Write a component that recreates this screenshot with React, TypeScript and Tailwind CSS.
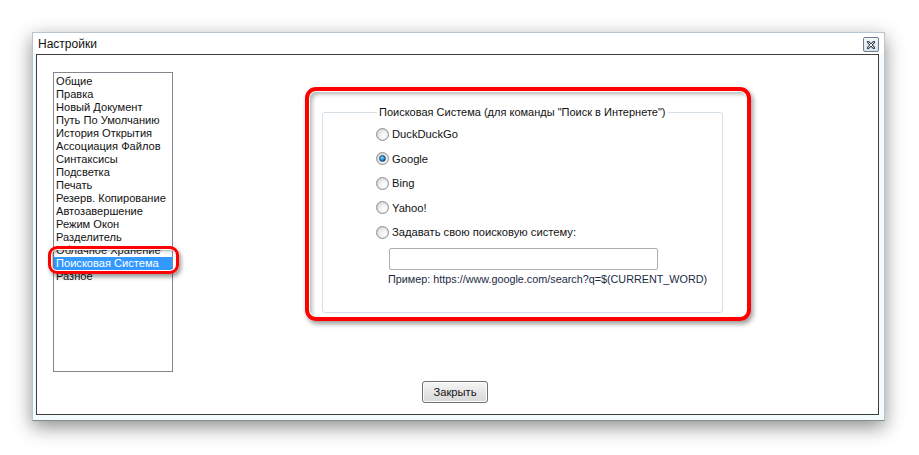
import React from "react";

const items = [
  "Общие",
  "Правка",
  "Новый Документ",
  "Путь По Умолчанию",
  "История Открытия",
  "Ассоциация Файлов",
  "Синтаксисы",
  "Подсветка",
  "Печать",
  "Резерв. Копирование",
  "Автозавершение",
  "Режим Окон",
  "Разделитель",
  "Облачное Хранение",
  "Поисковая Система",
  "Разное",
];

function Radio({ checked, label }: { checked?: boolean; label: string }) {
  return (
    <div className="flex items-center h-[16px]">
      <div className="w-[13px] h-[13px] rounded-full border border-[#8e8f8f] bg-[radial-gradient(circle_at_65%_65%,#ffffff_0%,#f0f0f0_40%,#cfcfcf_100%)] flex items-center justify-center shadow-[inset_0_0_1px_rgba(0,0,0,0.2)]">
        {checked && (
          <div className="w-[7px] h-[7px] rounded-full border border-[#1b4e7a] bg-[radial-gradient(circle_at_40%_35%,#9fe0ff_0%,#2a8fd6_45%,#0d3f74_100%)]" />
        )}
      </div>
      <span className="ml-[3px] text-[11.2px] leading-[14px] text-[#111]">{label}</span>
    </div>
  );
}

export default function App() {
  return (
    <div
      className="relative w-[919px] h-[455px] bg-white overflow-hidden pl-[32px] pt-[32px]"
      style={{ fontFamily: '"Liberation Sans", Arial, sans-serif' }}
    >
      {/* Window */}
      <div className="w-[853px] h-[389px] flex flex-col border border-[#b9c4cc] border-b-[#8a8a8a] bg-[#f2fbfd] shadow-[0_6px_18px_rgba(0,0,0,0.45)]">
        <div className="h-[21px] bg-white flex items-center justify-between">
          <span className="ml-[5px] text-[12px] text-[#111] leading-none mt-[1px]">Настройки</span>
          <div className="mr-[5px] mt-[2px] w-[16px] h-[15px] rounded-[2px] border border-[#6f7d8c] bg-[linear-gradient(#f4f8fb,#d9e3ec)] flex items-center justify-center">
            <svg width="8" height="8" viewBox="0 0 8 8">
              <path d="M1 1 L7 7 M7 1 L1 7" stroke="#3a4654" strokeWidth="2.6" strokeLinecap="square" />
              <path d="M1.3 1.3 L6.7 6.7 M6.7 1.3 L1.3 6.7" stroke="#ffffff" strokeWidth="1" />
            </svg>
          </div>
        </div>
        {/* content */}
        <div className="ml-[3px] mr-[5px] h-[361px] border border-[#3d3d3d] bg-white flex flex-col">
          <div className="flex items-start">
            <div className="ml-[16px] mt-[17px] w-[120px] h-[300px] border border-[#828790] bg-white pt-[2px]">
              {items.map((it) =>
                it === "Поисковая Система" ? (
                  <div key={it} className="h-[13px] leading-[13px] text-[11.1px] bg-[#3399ff] text-white pl-[2px] whitespace-nowrap">
                    {it}
                  </div>
                ) : (
                  <div key={it} className="h-[13px] leading-[13px] text-[11.1px] text-[#111] pl-[2px] whitespace-nowrap">
                    {it}
                  </div>
                )
              )}
            </div>
            <div className="relative ml-[149px] mt-[57px] w-[401px] h-[201px] border border-[#d5dfe5] rounded-[3px]">
              <span className="absolute left-[54px] top-[-8px] bg-white px-[2px] text-[11px] leading-[14px] text-[#111] whitespace-nowrap">
                Поисковая Система (для команды "Поиск в Интернете")
              </span>
              <div className="pt-[13px] pl-[53px] flex flex-col gap-[8.5px]">
                <Radio label="DuckDuckGo" />
                <Radio checked label="Google" />
                <Radio label="Bing" />
                <Radio label="Yahoo!" />
                <Radio label="Задавать свою поисковую систему:" />
              </div>
              <div className="ml-[66px] mt-[8px] w-[269px] h-[22px] border border-[#abadb3] rounded-[2px] bg-white" />
              <div className="ml-[65px] mt-[2px] text-[10.8px] leading-[14px] text-[#1b2a44] whitespace-nowrap">
                Пример: https://www.google.com/search?q=$(CURRENT_WORD)
              </div>
            </div>
          </div>
          <div className="ml-[385px] mt-[9px] w-[66px] h-[22px] border border-[#707070] rounded-[3px] bg-[linear-gradient(#f6f6f6,#e6e6e6_50%,#d8d8d8)] flex items-center justify-center text-[11.2px] text-[#111] shadow-[inset_0_0_0_1px_#fcfcfc]">
            Закрыть
          </div>
        </div>
      </div>

      {/* annotation overlays */}
      <div className="absolute left-[48px] top-[246px] w-[131px] h-[28px] rounded-[9px] border-[3px] border-[#ff0000] shadow-[2px_3px_4px_rgba(0,0,0,0.4),inset_0_0_0_1px_#ffffff,inset_2px_2px_3px_rgba(0,0,0,0.35)]" />
      <div className="absolute left-[305px] top-[87px] w-[446px] h-[234px] rounded-[11px] border-[4px] border-[#ff0000] shadow-[2px_3px_5px_rgba(0,0,0,0.4),inset_0_0_0_1px_#ffffff,inset_3px_3px_4px_rgba(0,0,0,0.3)]" />
    </div>
  );
}
